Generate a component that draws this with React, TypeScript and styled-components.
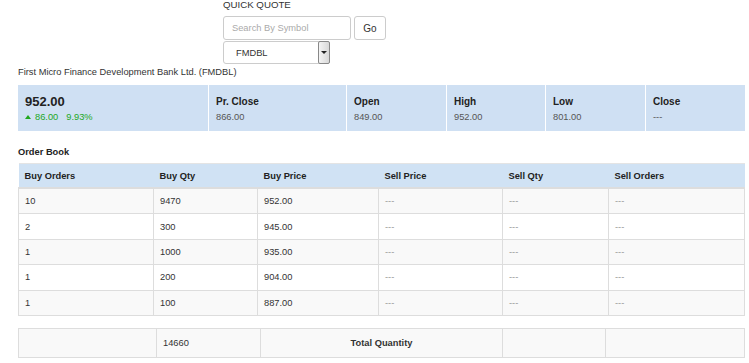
import styled, { createGlobalStyle } from 'styled-components';

const GlobalStyle = createGlobalStyle`
  body {
    margin: 0;
    background: #fff;
    font-family: 'Liberation Sans', Arial, sans-serif;
    font-size: 9.3px;
    color: #333;
  }
`;

const Page = styled.div`
  padding: 0 4px 0 18px;
`;

const QuickQuote = styled.div`
  padding-left: 205px;
  display: flex;
  flex-direction: column;
`;

const QuoteTitle = styled.div`
  font-size: 9.7px;
  line-height: 10px;
  height: 16px;
  text-transform: uppercase;
`;

const SearchRow = styled.div`
  display: flex;
  gap: 3px;
  height: 24px;
`;

const SearchInput = styled.div`
  box-sizing: border-box;
  width: 128px;
  height: 24px;
  border: 1px solid #ccc;
  border-radius: 3px;
  padding-left: 8px;
  display: flex;
  align-items: center;
  color: #aaa;
`;

const GoButton = styled.button`
  box-sizing: border-box;
  width: 32px;
  height: 24px;
  border: 1px solid #ccc;
  border-radius: 3px;
  background: #fff;
  font-family: inherit;
  font-size: 10px;
  color: #333;
  padding: 0;
`;

const SelectBox = styled.div`
  box-sizing: border-box;
  margin-top: 1px;
  width: 107px;
  height: 23px;
  border: 1px solid #ccc;
  border-radius: 3px;
  display: flex;
  align-items: stretch;
  justify-content: space-between;
`;

const SelectText = styled.span`
  padding-left: 12px;
  display: flex;
  align-items: center;
`;

const SelectArrow = styled.span`
  box-sizing: border-box;
  width: 12px;
  margin: -1px -1px -1px 0;
  border: 1px solid #888;
  border-radius: 2px;
  background: linear-gradient(to right, #f4f4f4, #d8d8d8);
  display: flex;
  align-items: center;
  justify-content: center;
  &::after {
    content: '';
    border-left: 3px solid transparent;
    border-right: 3px solid transparent;
    border-top: 3px solid #222;
  }
`;

const CompanyName = styled.div`
  height: 21px;
  line-height: 16px;
`;

const Summary = styled.div`
  display: grid;
  grid-template-columns: 190px 137px 99px 98px 99px 1fr;
  gap: 1px;
  background: #fff;
  height: 46px;
`;

const SummaryCell = styled.div`
  background: #cfe0f3;
  padding: 11px 0 0 7px;
`;

const PriceCell = styled(SummaryCell)`
  padding-top: 9px;
`;

const Price = styled.div`
  font-size: 13px;
  font-weight: bold;
  color: #222;
  line-height: 15px;
`;

const Change = styled.div`
  color: #22a81e;
  margin-top: 3px;
  display: flex;
  align-items: center;
  gap: 8px;
`;

const Up = styled.span`
  display: inline-block;
  width: 0;
  height: 0;
  border-left: 3.5px solid transparent;
  border-right: 3.5px solid transparent;
  border-bottom: 4px solid #22a81e;
  margin-right: -4px;
`;

const Label = styled.div`
  font-size: 10px;
  font-weight: bold;
  color: #222;
  line-height: 12px;
`;

const Value = styled.div`
  color: #555;
  margin-top: 3px;
  line-height: 12px;
`;

const SectionTitle = styled.div`
  font-weight: bold;
  color: #222;
  padding-top: 16px;
  height: 16px;
  line-height: 10px;
`;

const Table = styled.table`
  width: 100%;
  border-collapse: collapse;
  table-layout: fixed;
  margin-bottom: 12px;
`;

const Th = styled.th`
  background: #d0e2f4;
  text-align: left;
  font-weight: bold;
  color: #222;
  height: 23px;
  padding: 0 6px;
  border-top: 1px solid #e4e4e4;
  border-bottom: 2px solid #ddd;
`;

const Tr = styled.tr`
  &:nth-child(odd) {
    background: #f9f9f9;
  }
`;

const Td = styled.td<{ $dim?: boolean; $center?: boolean; $bold?: boolean }>`
  border: 1px solid #ddd;
  height: 24.4px;
  padding: 0 6px;
  color: ${(p) => (p.$dim ? '#999' : '#333')};
  text-align: ${(p) => (p.$center ? 'center' : 'left')};
  font-weight: ${(p) => (p.$bold ? 'bold' : 'normal')};
`;

const TotalRow = styled.tr`
  background: #f9f9f9;
`;

const TotalCell = styled(Td)`
  height: 28px;
`;

const stats = [
  { label: 'Pr. Close', value: '866.00' },
  { label: 'Open', value: '849.00' },
  { label: 'High', value: '952.00' },
  { label: 'Low', value: '801.00' },
  { label: 'Close', value: '---' },
];

const orders = [
  ['10', '9470', '952.00'],
  ['2', '300', '945.00'],
  ['1', '1000', '935.00'],
  ['1', '200', '904.00'],
  ['1', '100', '887.00'],
];

const widths = ['135px', '104px', '121px', '124px', '106px', 'auto'];

const App = () => {
  return (
    <Page>
      <GlobalStyle />
      <QuickQuote>
        <QuoteTitle>Quick Quote</QuoteTitle>
        <SearchRow>
          <SearchInput>Search By Symbol</SearchInput>
          <GoButton>Go</GoButton>
        </SearchRow>
        <SelectBox>
          <SelectText>FMDBL</SelectText>
          <SelectArrow />
        </SelectBox>
      </QuickQuote>
      <CompanyName>First Micro Finance Development Bank Ltd. (FMDBL)</CompanyName>
      <Summary>
        <PriceCell>
          <Price>952.00</Price>
          <Change>
            <Up />
            <span>86.00</span>
            <span>9.93%</span>
          </Change>
        </PriceCell>
        {stats.map((s) => (
          <SummaryCell key={s.label}>
            <Label>{s.label}</Label>
            <Value>{s.value}</Value>
          </SummaryCell>
        ))}
      </Summary>
      <SectionTitle>Order Book</SectionTitle>
      <Table>
        <colgroup>
          {widths.map((w, i) => (
            <col key={i} style={{ width: w }} />
          ))}
        </colgroup>
        <thead>
          <tr>
            {['Buy Orders', 'Buy Qty', 'Buy Price', 'Sell Price', 'Sell Qty', 'Sell Orders'].map((h) => (
              <Th key={h}>{h}</Th>
            ))}
          </tr>
        </thead>
        <tbody>
          {orders.map((o, i) => (
            <Tr key={i}>
              {o.map((c, j) => (
                <Td key={j}>{c}</Td>
              ))}
              <Td $dim>---</Td>
              <Td $dim>---</Td>
              <Td $dim>---</Td>
            </Tr>
          ))}
        </tbody>
      </Table>
      <Table>
        <colgroup>
          {['138px', '104px', '242px', '103px', 'auto'].map((w, i) => (
            <col key={i} style={{ width: w }} />
          ))}
        </colgroup>
        <tbody>
          <TotalRow>
            <TotalCell />
            <TotalCell>14660</TotalCell>
            <TotalCell $center $bold>
              Total Quantity
            </TotalCell>
            <TotalCell />
            <TotalCell />
          </TotalRow>
        </tbody>
      </Table>
    </Page>
  );
};

export default App;
